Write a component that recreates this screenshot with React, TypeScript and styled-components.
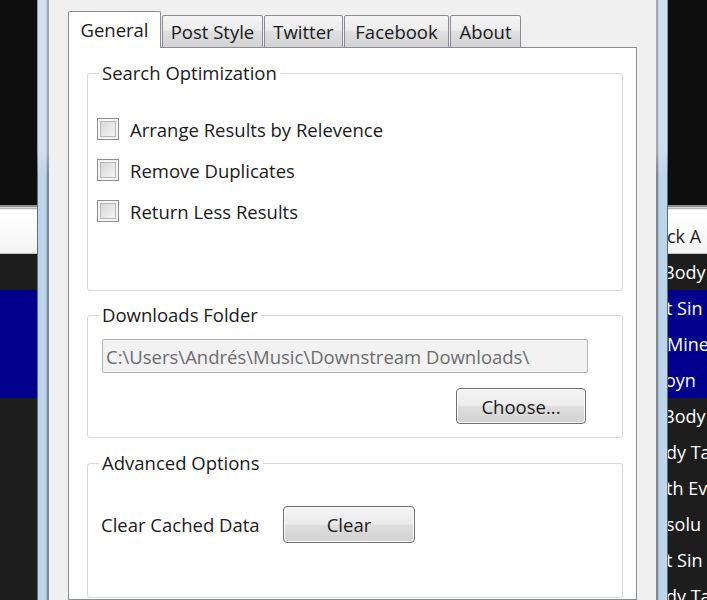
import React from 'react';
import styled, { createGlobalStyle } from 'styled-components';

const GlobalStyle = createGlobalStyle`
  html, body { margin: 0; padding: 0; background: #0e0e0e; }
  body { font-family: "Open Sans", "Noto Sans", sans-serif; }
  * { box-sizing: border-box; }
`;

const UI_FONT = '18.5px';

const Screen = styled.div`
  display: flex;
  width: 707px;
  height: 600px;
  overflow: hidden;
`;

/* ---------- background application (behind the dialog) ---------- */
const BgColumn = styled.div<{ $w: number }>`
  width: ${p => p.$w}px;
  flex: none;
  display: flex;
  flex-direction: column;
  overflow: hidden;
  background: #1d1d1d;
`;

const BlackArea = styled.div`
  height: 205px;
  flex: none;
  background: #0e0e0e;
`;

const Separator = styled.div`
  height: 5px;
  flex: none;
  background: linear-gradient(#8e8e8e 0 2px, #d6d6d6 2px 3px, #b8b8b8 3px 4px, #ececec 4px);
`;

const ListHeader = styled.div`
  height: 44px;
  flex: none;
  padding-top: 8px;
  display: flex;
  align-items: center;
  background: linear-gradient(#ffffff, #f4f4f4);
  border-bottom: 1px solid #c4c4c4;
  color: #1e1e1e;
  font-size: 18px;
  white-space: nowrap;
`;

const ListRow = styled.div<{ $sel?: boolean }>`
  height: 36px;
  flex: none;
  display: flex;
  align-items: center;
  background: ${p => (p.$sel ? '#00008c' : '#1d1d1d')};
  color: #ffffff;
  font-size: 18px;
  white-space: nowrap;
`;

const Cut = styled.span<{ $shift: number }>`
  margin-left: ${p => -p.$shift}px;
`;

/* ---------- dialog window ---------- */
const Window = styled.div`
  width: 631px;
  flex: none;
  display: flex;
`;

const Frame = styled.div<{ $side: 'left' | 'right' }>`
  width: 12px;
  flex: none;
  background:
    linear-gradient(rgba(255, 255, 255, 0.28) 0 150px, rgba(255, 255, 255, 0) 175px),
    linear-gradient(
      to ${p => (p.$side === 'left' ? 'right' : 'left')},
      #5f6f80 0 1px,
      #bed4ea 1px 9px,
      #a8bcd1 9px 10px,
      #7c8998 10px 12px
    );
`;

const Client = styled.div`
  flex: 1;
  min-width: 0;
  background: #f0f0f0;
  padding: 11px 19px 0 19px;
  display: flex;
  flex-direction: column;
`;

const TabStrip = styled.div`
  display: flex;
  align-items: flex-end;
  gap: 1px;
  height: 37px;
  margin-bottom: -1px;
  position: relative;
  z-index: 1;
`;

const Tab = styled.div<{ $w: number; $active?: boolean }>`
  width: ${p => p.$w}px;
  height: ${p => (p.$active ? 37 : 33)}px;
  flex: none;
  display: flex;
  align-items: center;
  justify-content: center;
  padding-bottom: ${p => (p.$active ? 2 : 0)}px;
  border: 1px solid #898c95;
  border-bottom: ${p => (p.$active ? 'none' : '1px solid #898c95')};
  border-radius: 2px 2px 0 0;
  background: ${p =>
    p.$active ? '#ffffff' : 'linear-gradient(#f4f4f4 0%, #ededed 45%, #dfdfdf 50%, #d3d3d3 100%)'};
  color: #1a1a1a;
  font-size: ${UI_FONT};
  white-space: nowrap;
`;

const Panel = styled.div`
  flex: 1;
  background: #ffffff;
  border: 1px solid #898c95;
  padding: 14px 13px 0 18px;
  display: flex;
  flex-direction: column;
  gap: 13px;
`;

const Group = styled.fieldset<{ $h: number; $mt?: number }>`
  height: ${p => p.$h}px;
  margin: ${p => p.$mt ?? 0}px 0 0 0;
  padding: 0;
  flex: none;
  border: 1px solid #d5d9dc;
  border-radius: 3px;
  min-width: 0;
`;

const Legend = styled.legend`
  margin-left: 11px;
  padding: 0 3px;
  font-size: ${UI_FONT};
  line-height: 22px;
  color: #1a1a1a;
`;

const GroupBody = styled.div<{ $pt: number; $pl: number; $gap?: number }>`
  display: flex;
  flex-direction: column;
  padding: ${p => p.$pt}px 0 0 ${p => p.$pl}px;
  gap: ${p => p.$gap ?? 0}px;
`;

const CheckRow = styled.label`
  display: flex;
  align-items: center;
  gap: 11px;
  height: 22px;
  font-size: ${UI_FONT};
  color: #1a1a1a;
  white-space: nowrap;
`;

const CheckBox = styled.span`
  width: 22px;
  height: 22px;
  flex: none;
  border: 1px solid #8e8f8f;
  background: linear-gradient(135deg, #d2d2d2 0%, #e8e8e8 55%, #fafafa 100%);
  box-shadow: inset 0 0 0 2px #f6f6f6, inset 0 0 0 3px #b8b8b8;
`;

const PathBox = styled.div`
  width: 486px;
  height: 34px;
  display: flex;
  align-items: center;
  padding-left: 3px;
  background: #f2f2f2;
  border: 1px solid #b1b4b7;
  border-radius: 2px;
  color: #6d6d6d;
  font-size: ${UI_FONT};
  white-space: nowrap;
  overflow: hidden;
`;

const ButtonRow = styled.div`
  display: flex;
  justify-content: flex-end;
  width: 486px;
  padding-right: 2px;
  margin-top: 15px;
`;

const Button = styled.button<{ $w: number; $h: number }>`
  width: ${p => p.$w}px;
  height: ${p => p.$h}px;
  flex: none;
  padding: 0;
  border: 1px solid #707070;
  border-radius: 4px;
  background: linear-gradient(#f4f4f4 0%, #ececec 48%, #dedede 52%, #d2d2d2 100%);
  box-shadow: inset 0 0 0 1px #fbfbfb;
  font-family: inherit;
  font-size: ${UI_FONT};
  color: #1a1a1a;
`;

const InlineRow = styled.div`
  display: flex;
  align-items: center;
`;

const FieldLabel = styled.span`
  width: 182px;
  flex: none;
  font-size: ${UI_FONT};
  color: #1a1a1a;
  white-space: nowrap;
`;

const tabs = [
  { label: 'General', w: 93, active: true },
  { label: 'Post Style', w: 101 },
  { label: 'Twitter', w: 79 },
  { label: 'Facebook', w: 105 },
  { label: 'About', w: 71 },
];

const rightRows: { text: string; shift: number; sel?: boolean }[] = [
  { text: 'Body', shift: 5 },
  { text: 't Sin', shift: 2, sel: true },
  { text: 'Mine', shift: 1, sel: true },
  { text: 'oyn', shift: 3, sel: true },
  { text: 'Body', shift: 5 },
  { text: 'dy Ta', shift: 2 },
  { text: 'th Ev', shift: 2 },
  { text: 'solu', shift: 2 },
  { text: 't Sin', shift: 2 },
  { text: 'dy Ta', shift: 2 },
];

const leftRows = [false, true, true, true, false, false, false, false, false, false];

export default function App() {
  return (
    <>
      <GlobalStyle />
      <Screen>
        <BgColumn $w={37}>
          <BlackArea />
          <Separator />
          <ListHeader />
          {leftRows.map((sel, i) => (
            <ListRow key={i} $sel={sel} />
          ))}
        </BgColumn>

        <Window>
          <Frame $side="left" />
          <Client>
            <TabStrip>
              {tabs.map(t => (
                <Tab key={t.label} $w={t.w} $active={t.active}>
                  {t.label}
                </Tab>
              ))}
            </TabStrip>
            <Panel>
              <Group $h={229}>
                <Legend>Search Optimization</Legend>
                <GroupBody $pt={34} $pl={9} $gap={19}>
                  <CheckRow>
                    <CheckBox />
                    Arrange Results by Relevence
                  </CheckRow>
                  <CheckRow>
                    <CheckBox />
                    Remove Duplicates
                  </CheckRow>
                  <CheckRow>
                    <CheckBox />
                    Return Less Results
                  </CheckRow>
                </GroupBody>
              </Group>

              <Group $h={134}>
                <Legend>Downloads Folder</Legend>
                <GroupBody $pt={13} $pl={14}>
                  <PathBox>C:\Users\Andrés\Music\Downstream Downloads\</PathBox>
                  <ButtonRow>
                    <Button $w={130} $h={36}>Choose...</Button>
                  </ButtonRow>
                </GroupBody>
              </Group>

              <Group $h={146} $mt={1}>
                <Legend>Advanced Options</Legend>
                <GroupBody $pt={32} $pl={13}>
                  <InlineRow>
                    <FieldLabel>Clear Cached Data</FieldLabel>
                    <Button $w={132} $h={37}>Clear</Button>
                  </InlineRow>
                </GroupBody>
              </Group>
            </Panel>
          </Client>
          <Frame $side="right" />
        </Window>

        <BgColumn $w={39}>
          <BlackArea />
          <Separator />
          <ListHeader>
            <Cut $shift={1}>ck A</Cut>
          </ListHeader>
          {rightRows.map((r, i) => (
            <ListRow key={i} $sel={r.sel}>
              <Cut $shift={r.shift}>{r.text}</Cut>
            </ListRow>
          ))}
        </BgColumn>
      </Screen>
    </>
  );
}
